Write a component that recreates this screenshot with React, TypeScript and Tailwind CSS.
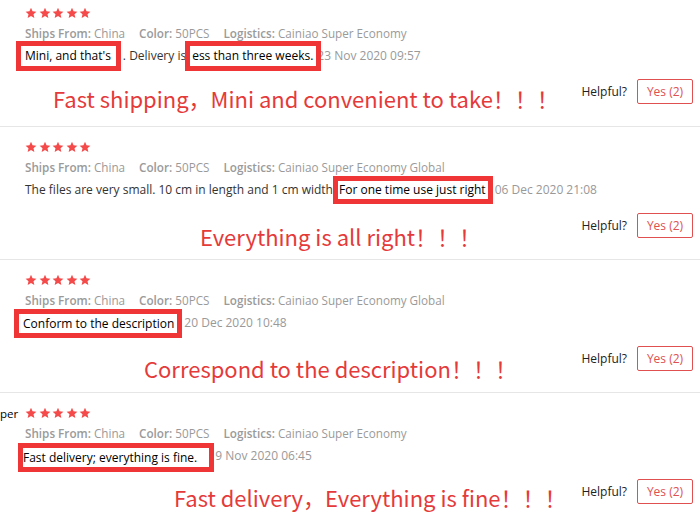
import React from 'react'

type Review = {
  name?: string
  logistics: string
  note: string
  noteMl: string
  noteMt: string
  pt: string
  h: string
}

const reviews: Review[] = [
  {
    logistics: 'Cainiao Super Economy',
    note: 'Fast shipping，Mini and convenient to take！！！',
    noteMl: 'ml-[28px]',
    noteMt: 'mt-[4px]',
    pt: 'pt-[6px]',
    h: 'h-[127px]',
  },
  {
    logistics: 'Cainiao Super Economy Global',
    note: 'Everything is all right！！！',
    noteMl: 'ml-[175px]',
    noteMt: 'mt-[8px]',
    pt: 'pt-[13px]',
    h: 'h-[133px]',
  },
  {
    logistics: 'Cainiao Super Economy Global',
    note: 'Correspond to the description！！！',
    noteMl: 'ml-[119px]',
    noteMt: 'mt-[7px]',
    pt: 'pt-[13px]',
    h: 'h-[133px]',
  },
  {
    name: 'per',
    logistics: 'Cainiao Super Economy',
    note: 'Fast delivery，Everything is fine！！！',
    noteMl: 'ml-[149px]',
    noteMt: 'mt-[3px]',
    pt: 'pt-[13px]',
    h: 'h-[132px]',
  },
]

function Stars() {
  return (
    <div className="flex h-[14px] items-center gap-[1.5px]">
      {[0, 1, 2, 3, 4].map((i) => (
        <svg key={i} width="12" height="12" viewBox="0 0 24 24">
          <polygon
            fill="#f44a4a"
            points="12,1.5 15.1,8.6 22.8,9.3 17,14.4 18.7,22 12,18 5.3,22 7,14.4 1.2,9.3 8.9,8.6"
          />
        </svg>
      ))}
    </div>
  )
}

// red annotation box drawn over the review text
function Mark({ children, className }: { children: React.ReactNode; className: string }) {
  return (
    <span
      className={`relative z-10 inline-block border-[5px] border-[#ef3535] bg-white leading-[18px] text-black ${className}`}
    >
      {children}
    </span>
  )
}

function ReviewText({ index }: { index: number }) {
  if (index === 0)
    return (
      <>
        <Mark className="-ml-[9px] pl-[4px] pr-[5px] pt-[1px] pb-[1px] -my-[7px]">Mini, and that's</Mark>
        <span className="ml-[2px]">. Delivery is</span>
        <Mark className="-ml-[1px] pl-[2px] pr-[3px] pt-[1px] pb-[1px] -my-[7px]">ess than three weeks.</Mark>
        <span className="-ml-[4px] text-[#999]">23 Nov 2020 09:57</span>
      </>
    )
  if (index === 1)
    return (
      <>
        <span>The files are very small. 10 cm in length and 1 cm width</span>
        <Mark className="pl-[1px] pr-[2px] -my-[6px]">For one time use just right</Mark>
        <span className="ml-[2px] text-[#999]">06 Dec 2020 21:08</span>
      </>
    )
  if (index === 2)
    return (
      <>
        <Mark className="-ml-[11px] pl-[4px] pr-[3px] pt-[1px] -my-[6px] top-[1px]">Conform to the description</Mark>
        <span className="ml-[2px] text-[#999]">20 Dec 2020 10:48</span>
      </>
    )
  return (
    <>
      <Mark className="-ml-[7px] pl-[0px] pr-[12px] pt-[1px] -my-[6px] top-[2px]">Fast delivery; everything is fine.</Mark>
      <span className="ml-[1px] text-[#999]">9 Nov 2020 06:45</span>
    </>
  )
}

export default function App() {
  return (
    <div
      className="w-[700px] h-[524px] overflow-hidden bg-white text-[12px] text-[#333]"
      style={{ fontFamily: '"Open Sans", "Liberation Sans", sans-serif' }}
    >
      {reviews.map((r, i) => (
        <div key={i} className={`flex ${r.h} ${r.pt} ${i < 3 ? 'border-b border-[#e6e6e6]' : ''}`}>
          <div className="w-[25px] shrink-0 leading-[14px] text-black">
            {r.name && <span className="relative top-[1px] text-[11.5px]">{r.name}</span>}
          </div>
          <div className="flex-1 flex flex-col">
            <Stars />
            <div className="mt-[4px] flex h-[18px] items-center gap-[14px] text-[11.7px] leading-[18px] text-[#9a9a9a]">
              <span>
                <span className="font-semibold">Ships From:</span> China
              </span>
              <span>
                <span className="font-semibold">Color:</span> 50PCS
              </span>
              <span>
                <span className="font-semibold">Logistics:</span> {r.logistics}
              </span>
            </div>
            <div className="mt-[5px] h-[18px] whitespace-nowrap leading-[18px]">
              <ReviewText index={i} />
            </div>
            <div className="mt-[14px] flex items-start">
              <div
                className={`${r.noteMl} ${r.noteMt} text-[22px] leading-[30px] text-[#e53a3a]`}
                style={{ fontFamily: '"Noto Sans CJK SC", "Noto Sans", sans-serif' }}
              >
                {r.note}
              </div>
              <div className="ml-auto flex items-center gap-[10px] pr-[7px]">
                <span className="text-[#222]">Helpful?</span>
                <span className="flex h-[25px] w-[56px] items-center justify-center rounded-[2px] border border-[#e05050] text-[#e05050]">
                  Yes (2)
                </span>
              </div>
            </div>
          </div>
        </div>
      ))}
    </div>
  )
}
